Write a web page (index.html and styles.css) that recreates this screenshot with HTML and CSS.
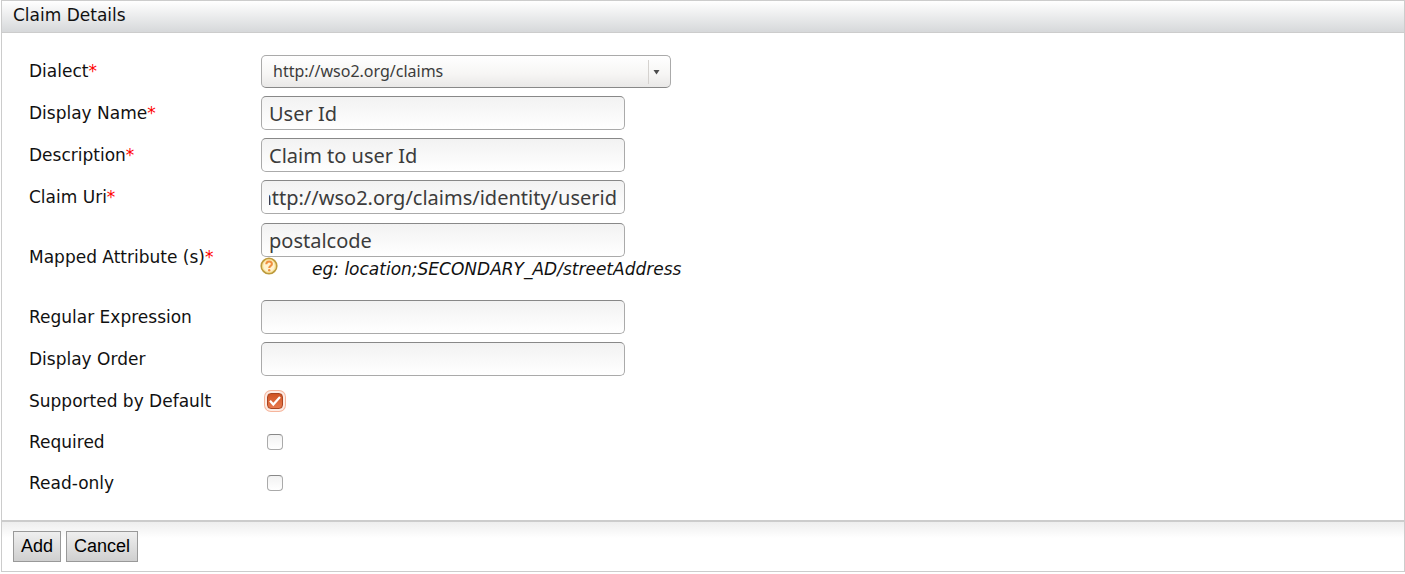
FILE: index.html
```
<!DOCTYPE html>
<html lang="en">
<head>
<meta charset="utf-8">
<title>Claim Details</title>
<link rel="stylesheet" href="styles.css">
</head>
<body>
<form class="panel">
  <h1 class="panel-title">Claim Details</h1>
  <div class="fields">
    <div class="row">
      <label class="label" for="dialect">Dialect<span class="required">*</span></label>
      <div class="select-box">
        <select class="select" id="dialect"><option>http://wso2.org/claims</option></select>
        <svg class="arrow" viewBox="0 0 24 24" aria-hidden="true"><path d="M1.5 0V24" stroke="#d5d2cf"/><path d="M6.500 10H12.500L9.500 14.500Z" fill="#4c4c4c"/></svg>
      </div>
    </div>
    <div class="row">
      <label class="label" for="name">Display Name<span class="required">*</span></label>
      <input class="text" id="name" type="text" value="User Id">
    </div>
    <div class="row">
      <label class="label" for="description">Description<span class="required">*</span></label>
      <input class="text" id="description" type="text" value="Claim to user Id">
    </div>
    <div class="row">
      <label class="label" for="uri">Claim Uri<span class="required">*</span></label>
      <input class="text show-end" id="uri" type="text" value="http://wso2.org/claims/identity/userid">
    </div>
    <div class="row mapped">
      <label class="label" for="mapped">Mapped Attribute (s)<span class="required">*</span></label>
      <div class="stack">
        <input class="text" id="mapped" type="text" value="postalcode">
        <div class="hint">
          <svg class="help" viewBox="0 0 18 18" aria-hidden="true"><circle cx="9" cy="9" r="7.700" fill="#fff3cf" stroke="#bd9a3c" stroke-width="1.800"/><circle cx="9" cy="9" r="6.400" fill="none" stroke="#f3d880"/><path d="M6.300 7.300C6.300 3.600 12 3.700 11.900 6.900C11.900 8.900 9.200 8.700 9.200 11" fill="none" stroke="#f09040" stroke-width="2.100"/><circle cx="9.200" cy="13.200" r="1.200" fill="#f09040"/></svg>
          <em>eg: location;SECONDARY_AD/streetAddress</em>
        </div>
      </div>
    </div>
    <div class="row">
      <label class="label" for="regex">Regular Expression</label>
      <input class="text" id="regex" type="text">
    </div>
    <div class="row">
      <label class="label" for="order">Display Order</label>
      <input class="text" id="order" type="text">
    </div>
    <div class="row check-row">
      <label class="label" for="supported">Supported by Default</label>
      <span class="check-box">
        <input class="check" id="supported" type="checkbox" checked>
        <svg class="tick" viewBox="0 0 16 16" aria-hidden="true"><path d="M3 7.800L6.300 11.500L13 4" fill="none" stroke="#fff" stroke-width="2.200"/></svg>
      </span>
    </div>
    <div class="row check-row">
      <label class="label" for="required">Required</label>
      <span class="check-box"><input class="check" id="required" type="checkbox"></span>
    </div>
    <div class="row check-row">
      <label class="label" for="readonly">Read-only</label>
      <span class="check-box"><input class="check" id="readonly" type="checkbox"></span>
    </div>
  </div>
  <div class="actions">
    <button class="button" type="button">Add</button>
    <button class="button" type="button">Cancel</button>
  </div>
</form>
</body>
</html>
```
FILE: styles.css
```
* { box-sizing: border-box; }
body {
  margin: 0 0 0 1px;
  background: #fff;
  color: #111;
  font: 17px/20px "DejaVu Sans", sans-serif;
}
.panel { border: 1px solid #ccc; }
.panel-title {
  margin: 0;
  padding: 4px 11px 7px;
  border-bottom: 1px solid #ccc;
  background: linear-gradient(#fff, #d6d8da);
  font-size: 17px;
  font-weight: normal;
}
.fields { padding: 17px 27px; }
.row {
  display: grid;
  grid-template-columns: 232px 1fr;
  align-items: center;
  min-height: 42px;
}
.check-row { min-height: 41px; }
.required { color: #f00; }
.text, .select {
  height: 34px;
  margin: 0;
  border: 1px solid #aaa;
  border-radius: 5px;
  color: #3c3c3c;
  font-family: "Noto Sans", sans-serif;
}
.text {
  width: 364px;
  padding: 0 7px;
  border-top-color: #888;
  background: linear-gradient(#f2f2f2, #fff);
  font-size: 20px;
}
.show-end { direction: rtl; }
.select-box {
  position: relative;
  display: flex;
  width: 410px;
}
.select {
  appearance: none;
  width: 100%;
  height: 33px;
  padding: 0 32px 0 11px;
  border-bottom-color: #888;
  background: linear-gradient(#fff, #f6f5f4 60%, #e9e8e7);
  font-size: 16px;
}
.arrow {
  position: absolute;
  top: 5px;
  right: 0;
  width: 24px;
  height: 24px;
  pointer-events: none;
}
.mapped { min-height: 78px; }
.stack { padding-bottom: 10px; }
.stack .text { display: block; }
.hint {
  display: flex;
  align-items: flex-start;
  gap: 34px;
  line-height: 24px;
}
.help {
  width: 18px;
  height: 18px;
  margin-left: -1px;
}
.check-box {
  position: relative;
  display: flex;
  width: 16px;
  margin-left: 6px;
}
.check {
  appearance: none;
  width: 16px;
  height: 16px;
  margin: 0;
  border: 1px solid #aaa;
  border-top-color: #888;
  border-radius: 4px;
  background: linear-gradient(#f2f2f2, #fff);
}
.check:checked {
  border-color: #a84420;
  background: linear-gradient(#cf5323, #e7794d);
  box-shadow: 0 0 0 2px #fdece5, 0 0 0 3px #f6b59c;
}
.tick {
  position: absolute;
  inset: 0;
  pointer-events: none;
}
.actions {
  display: flex;
  gap: 5px;
  padding: 9px 11px;
  border-top: 2px solid #ccc;
  background: linear-gradient(#eee, #fff 16px);
}
.button {
  height: 31px;
  padding: 0 7px;
  border: 1px solid #999;
  border-radius: 0;
  background: linear-gradient(#efefef, #cfcfcf);
  color: #000;
  font: 18px "Liberation Sans", Arial, sans-serif;
}
```
